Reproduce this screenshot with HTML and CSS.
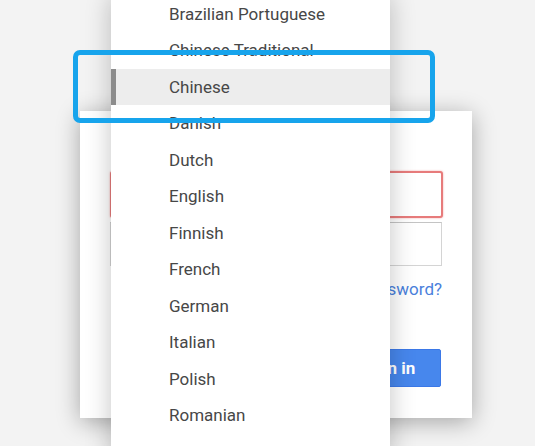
FILE: index.html
```html
<!DOCTYPE html>
<html lang="en">
<head>
<meta charset="utf-8">
<title>Language menu</title>
<link rel="stylesheet" href="styles.css">
</head>
<body>
<div class="page">
  <div class="card">
    <div class="field field-error"></div>
    <div class="field"></div>
    <div class="forgot"><a href="#">Forgot password?</a></div>
    <div class="actions"><button class="signin">Sign in</button></div>
  </div>

  <ul class="menu">
    <li>Brazilian Portuguese</li>
    <li>Chinese Traditional</li>
    <li class="selected">Chinese</li>
    <li>Danish</li>
    <li>Dutch</li>
    <li>English</li>
    <li>Finnish</li>
    <li>French</li>
    <li>German</li>
    <li>Italian</li>
    <li>Polish</li>
    <li>Romanian</li>
  </ul>

  <div class="callout"></div>
</div>
</body>
</html>
```

FILE: styles.css
```css
html, body {
  margin: 0;
  padding: 0;
}
body {
  width: 535px;
  height: 446px;
  overflow: hidden;
  background: #f3f3f3;
  font-family: Roboto, "Noto Sans", Arial, sans-serif;
}
.page {
  position: relative;
  width: 535px;
  height: 446px;
  overflow: hidden;
}
.card {
  margin: 111px 0 0 80px;
  width: 392px;
  height: 307px;
  box-sizing: border-box;
  background: #fff;
  padding: 60px 29px 0 30px;
  box-shadow: 0 4px 22px rgba(0, 0, 0, 0.32);
  display: flex;
  flex-direction: column;
}
.field {
  height: 44px;
  width: 332px;
  box-sizing: border-box;
  border: 1px solid #d4d4d4;
  border-top-color: #c4c4c4;
  background: #fff;
}
.field-error {
  height: 47px;
  width: 333px;
  border: 2px solid #e77b7b;
  border-radius: 3px;
  box-shadow: 0 0 2px rgba(231, 100, 100, 0.6);
  margin-bottom: 4px;
}
.forgot {
  text-align: right;
  margin-top: 12px;
  margin-right: 1px;
  font-size: 17px;
  line-height: 22px;
}
.forgot a {
  color: #4a7fdc;
  text-decoration: none;
}
.actions {
  display: flex;
  justify-content: flex-end;
  margin-top: 49px;
  margin-right: 2px;
}
.signin {
  width: 104px;
  height: 38px;
  border: 1px solid #3b78e7;
  border-radius: 2px;
  background: #4787ed;
  color: #fff;
  font-family: Roboto, Arial, sans-serif;
  font-weight: 700;
  font-size: 17px;
  padding: 0;
}
.menu {
  position: absolute;
  left: 111px;
  top: -4.5px;
  width: 279px;
  height: 470px;
  margin: 0;
  padding: 0;
  list-style: none;
  background: #fff;
  box-shadow: 0 0 24px rgba(0, 0, 0, 0.24);
  z-index: 2;
}
.menu li {
  height: 36.5px;
  line-height: 36.5px;
  padding-left: 58px;
  font-size: 17px;
  color: #474747;
  white-space: nowrap;
}
.menu li.selected {
  background: #ededed;
  box-shadow: inset 5px 0 0 #8c8c8c;
}
.callout {
  position: absolute;
  left: 73px;
  top: 50px;
  width: 362px;
  height: 73px;
  box-sizing: border-box;
  border: 5px solid #17a4ec;
  border-radius: 7px;
  z-index: 3;
}
```
